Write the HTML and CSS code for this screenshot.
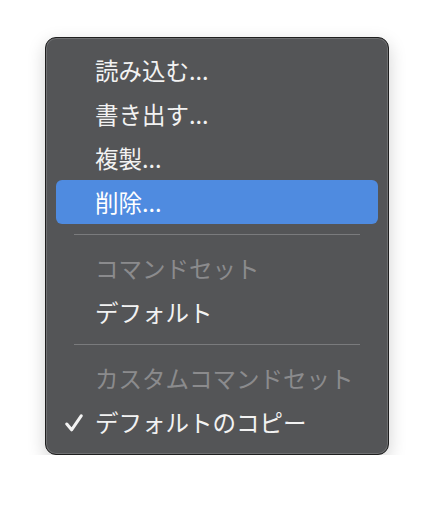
FILE: index.html
```html
<!DOCTYPE html>
<html lang="ja">
<head>
    <meta charset="UTF-8">
    <meta name="viewport" content="width=device-width, initial-scale=1.0">
    <title>コマンドセット</title>
    <link rel="stylesheet" href="styles.css">
</head>
<body>
    <div class="menu">
        <div class="item">読み込む...</div>
        <div class="item">書き出す...</div>
        <div class="item">複製...</div>
        <div class="item selected">削除...</div>
        <div class="separator"></div>
        <div class="item disabled">コマンドセット</div>
        <div class="item">デフォルト</div>
        <div class="separator"></div>
        <div class="item disabled">カスタムコマンドセット</div>
        <div class="item checked">
            <svg class="check" viewBox="0 0 18 18" width="18" height="18">
                <path d="M1.8 10 L6.6 15.8 L16.2 1.8" fill="none" stroke="#f2f2f2" stroke-width="3" stroke-linecap="round" stroke-linejoin="round"/>
            </svg>
            デフォルトのコピー
        </div>
    </div>
</body>
</html>
```

FILE: styles.css
```css
body {
    margin: 0;
    background: #ffffff;
    font-family: "Noto Sans CJK JP", "Noto Sans", sans-serif;
}
.menu {
    width: 344px;
    margin: 37px 0 0 45px;
    padding: 10px 10px 10px;
    box-sizing: border-box;
    background: #545557;
    border: 1px solid #1f1f1f;
    border-radius: 11px;
    box-shadow: inset 0 0 0 1px #6e6f71, 0 6px 18px rgba(0, 0, 0, 0.18);
}
.item {
    position: relative;
    height: 44px;
    line-height: 44px;
    padding-left: 39px;
    border-radius: 6px;
    color: #f2f2f2;
    font-size: 23.5px;
    white-space: nowrap;
}
.selected {
    background: #4f8be0;
    color: #ffffff;
}
.disabled {
    color: #8b8b8d;
}
.separator {
    height: 1px;
    margin: 10px 18px 11px;
    background: #7a7b7d;
}
.check {
    position: absolute;
    left: 9px;
    top: 14px;
}
```
